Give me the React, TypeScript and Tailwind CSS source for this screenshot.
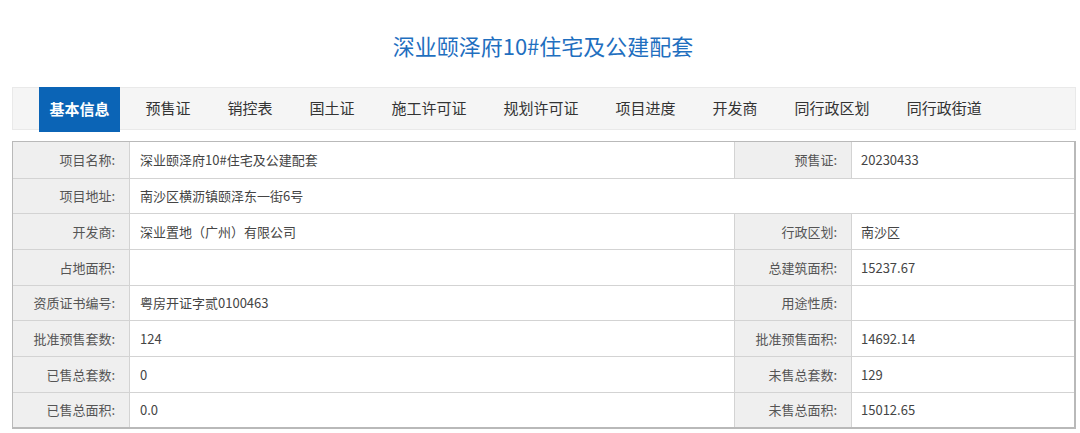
import React from "react";

const tabs = ["预售证", "销控表", "国土证", "施工许可证", "规划许可证", "项目进度", "开发商", "同行政区划", "同行政街道"];

type Row = { h: string; l1: string; v1: string; l2?: string; v2?: string; span?: boolean };

const rows: Row[] = [
  { h: "h-[36px]", l1: "项目名称:", v1: "深业颐泽府10#住宅及公建配套", l2: "预售证:", v2: "20230433" },
  { h: "h-[35px]", l1: "项目地址:", v1: "南沙区横沥镇颐泽东一街6号", span: true },
  { h: "h-[36px]", l1: "开发商:", v1: "深业置地（广州）有限公司", l2: "行政区划:", v2: "南沙区" },
  { h: "h-[36px]", l1: "占地面积:", v1: "", l2: "总建筑面积:", v2: "15237.67" },
  { h: "h-[35px]", l1: "资质证书编号:", v1: "粤房开证字贰0100463", l2: "用途性质:", v2: "" },
  { h: "h-[36px]", l1: "批准预售套数:", v1: "124", l2: "批准预售面积:", v2: "14692.14" },
  { h: "h-[36px]", l1: "已售总套数:", v1: "0", l2: "未售总套数:", v2: "129" },
  { h: "h-[35px]", l1: "已售总面积:", v1: "0.0", l2: "未售总面积:", v2: "15012.65" },
];

export default function App() {
  return (
    <div
      className="w-[1080px] h-[433px] bg-white overflow-hidden"
      style={{ fontFamily: '"Noto Sans CJK SC", "Noto Sans", sans-serif' }}
    >
      <div className="h-[87px] flex items-center justify-center pt-[3px]">
        <h1 className="text-[22px] text-[#1f6fbf] font-normal tracking-[0px] ml-[6px]">深业颐泽府10#住宅及公建配套</h1>
      </div>
      <nav className="ml-[12px] w-[1064px] h-[43px] bg-[#f5f5f5] border border-[#e9e9e9] flex items-start pl-[26px]">
        <div className="-mt-px h-[45px] w-[81px] bg-[#0b64b6] text-white font-bold text-[15px] flex items-center justify-center">
          基本信息
        </div>
        <div className="flex h-full items-center ml-[7px]">
          {tabs.map((t) => (
            <div key={t} className="px-[18.5px] text-[15px] text-[#333]">
              {t}
            </div>
          ))}
        </div>
      </nav>
      <div className="ml-[12px] mt-[11px] w-[1064px] border border-[#b9b9b9] border-r-2 border-b-2 text-[13px]">
        {rows.map((r, i) => (
          <div
            key={i}
            className={`grid grid-cols-[117px_605px_117px_1fr] ${r.h} ${i > 0 ? "border-t border-[#d3d3d3]" : ""}`}
          >
            <div className="bg-[#efefef] border-r border-[#d3d3d3] flex items-center justify-end pr-[14px] text-[#555]">
              {r.l1}
            </div>
            {r.span ? (
              <div className="col-span-3 flex items-center pl-[10px] text-[#444]">{r.v1}</div>
            ) : (
              <>
                <div className="flex items-center pl-[10px] text-[#444] border-r border-[#d3d3d3]">{r.v1}</div>
                <div className="bg-[#efefef] border-r border-[#d3d3d3] flex items-center justify-end pr-[14px] text-[#555]">
                  {r.l2}
                </div>
                <div className="flex items-center pl-[9px] text-[#444]">{r.v2}</div>
              </>
            )}
          </div>
        ))}
      </div>
    </div>
  );
}
